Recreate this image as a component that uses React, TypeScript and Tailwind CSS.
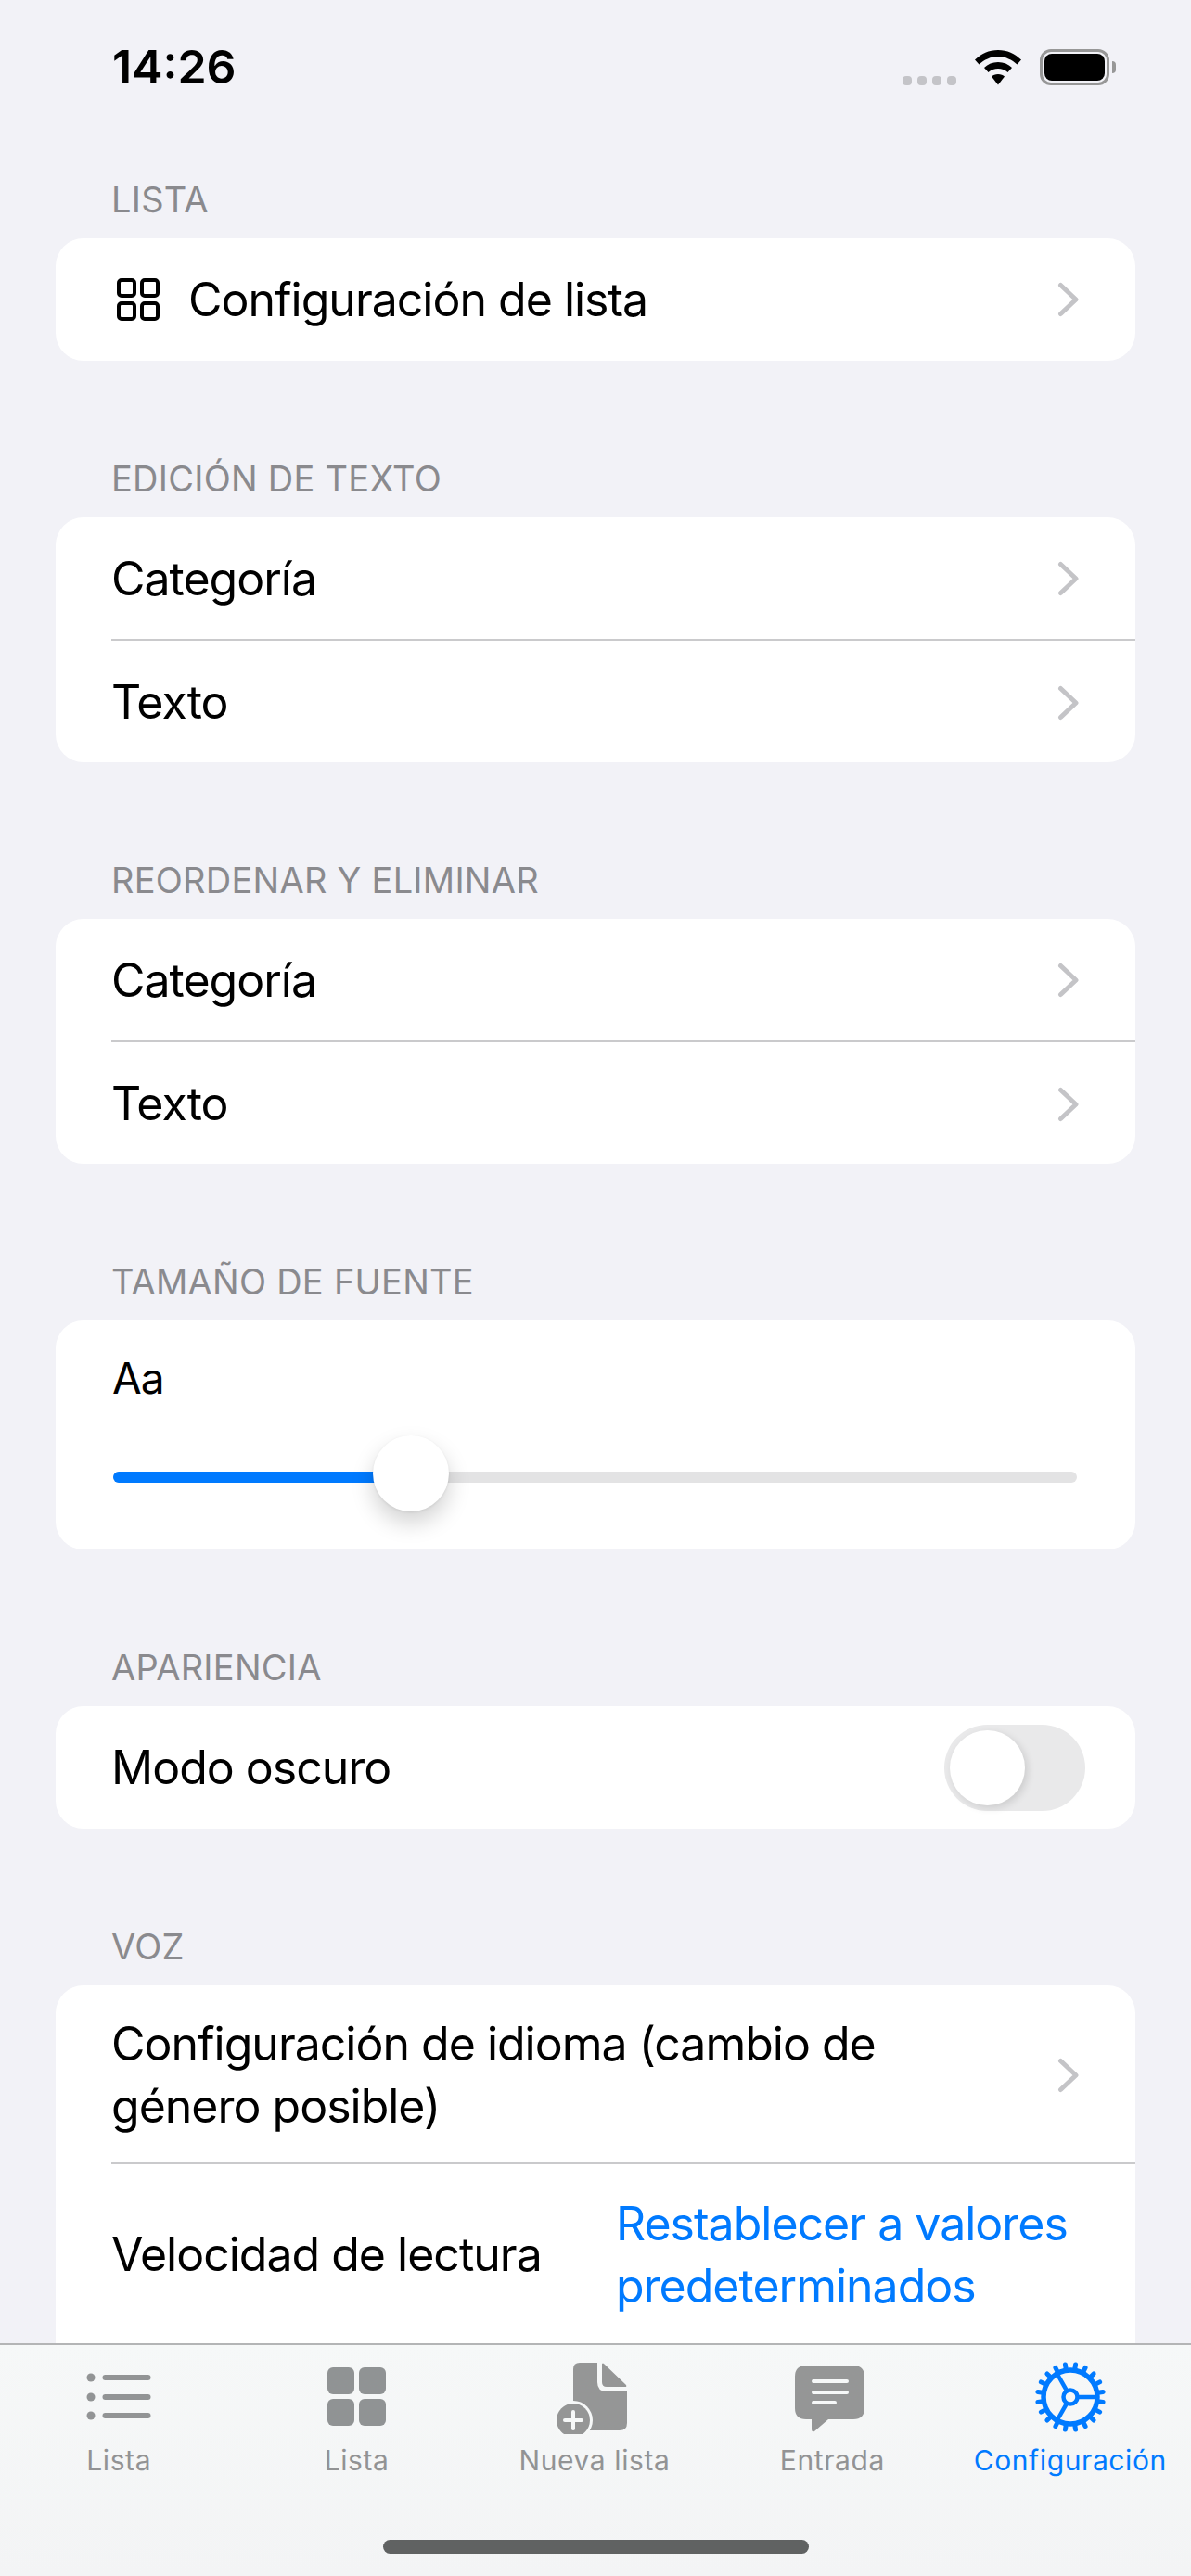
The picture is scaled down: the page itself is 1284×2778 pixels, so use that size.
const font = { fontFamily: '"Inter", "Noto Sans", sans-serif' }

const teeth = Array.from({ length: 20 }, (_, i) => i * 18 + 9)

const Chevron = () => (
    <svg width="24" height="38" viewBox="0 0 24 38" fill="none" className="shrink-0">
        <path d="M3.5 3.5 L20 19 L3.5 34.5" stroke="#c4c4c7" strokeWidth="5" strokeLinecap="round" strokeLinejoin="round" />
    </svg>
)

const GridOutline = () => (
    <svg width="46" height="46" viewBox="0 0 46 46" fill="none" stroke="#000" strokeWidth="4">
        <rect x="2" y="2" width="17" height="17" rx="3" />
        <rect x="27" y="2" width="17" height="17" rx="3" />
        <rect x="2" y="27" width="17" height="17" rx="3" />
        <rect x="27" y="27" width="17" height="17" rx="3" />
    </svg>
)

const ListIcon = () => (
    <svg width="90" height="80" viewBox="0 0 90 80" fill="#929495">
        <circle cx="15" cy="19" r="4.5" />
        <circle cx="15" cy="40" r="4.5" />
        <circle cx="15" cy="60" r="4.5" />
        <rect x="27.5" y="16" width="52" height="6" rx="3" />
        <rect x="27.5" y="37" width="52" height="6" rx="3" />
        <rect x="27.5" y="57" width="52" height="6" rx="3" />
    </svg>
)

const GridIcon = () => (
    <svg width="90" height="80" viewBox="0 0 90 80" fill="#909394">
        <rect x="13" y="8" width="29" height="29" rx="6" />
        <rect x="47" y="8" width="29" height="29" rx="6" />
        <rect x="13" y="42" width="29" height="29" rx="6" />
        <rect x="47" y="42" width="29" height="29" rx="6" />
    </svg>
)

const DocIcon = () => (
    <svg width="90" height="80" viewBox="0 0 90 80" fill="#959696">
        <path d="M29 3 H48 V24 Q48 34 58 34 H80 V68 Q80 76 72 76 H29 Q22 76 22 69 V10 Q22 3 29 3 Z" />
        <path d="M53 4 Q54 3 55 4 L79 27 Q80 29 78 29 H58 Q53 29 53 24 Z" />
        <circle cx="22" cy="65" r="21" fill="#f6f8f8" />
        <circle cx="22" cy="65" r="18" />
        <rect x="11" y="63" width="22" height="4" rx="2" fill="#f6f8f8" />
        <rect x="20" y="54" width="4" height="22" rx="2" fill="#f6f8f8" />
    </svg>
)

const EntryIcon = () => (
    <svg width="90" height="80" viewBox="0 0 90 80" fill="#959696">
        <path d="M17 6 H68 Q80 6 80 18 V52 Q80 64 68 64 H41 L26 77 Q23 78 23 75 V64 H17 Q5 64 5 52 V18 Q5 6 17 6 Z" />
        <rect x="23" y="21" width="40" height="4" rx="2" fill="#f6f8f8" />
        <rect x="23" y="33" width="40" height="4" rx="2" fill="#f6f8f8" />
        <rect x="23" y="44" width="27" height="4" rx="2" fill="#f6f8f8" />
    </svg>
)

const GearIcon = () => (
    <svg width="90" height="80" viewBox="0 0 90 80" fill="none" stroke="#007aff">
        <g transform="translate(45 40)">
            {teeth.map((deg) => (
                <line key={deg} x1="0" y1="-30" x2="0" y2="-35.5" strokeWidth="5" strokeLinecap="round" transform={`rotate(${deg})`} />
            ))}
            <circle r="29" strokeWidth="5.5" />
            <circle r="7.5" strokeWidth="4.5" />
            <line x1="9" y1="0" x2="28" y2="0" strokeWidth="4.5" />
            <line x1="-4.5" y1="-7.8" x2="-14" y2="-24.5" strokeWidth="4.5" />
            <line x1="-4.5" y1="7.8" x2="-14" y2="24.5" strokeWidth="4.5" />
        </g>
    </svg>
)

const Header = ({ label }: { label: string }) => (
    <h2 className="h-[46px] mb-[19px] pl-[120px] text-[38px] leading-[46px] tracking-[0.25px] font-normal text-[#8a8a8e]">{label}</h2>
)

const Row = ({ children, border }: { children: React.ReactNode; border?: boolean }) => (
    <div className="pl-[60px]">
        <div className={`box-border h-[132px] pr-[60px] flex items-center justify-between border-[#cacacc] ${border ? "border-t-2 mt-[-1px] pt-[3px]" : ""}`}>
            {children}
        </div>
    </div>
)

const tabs = [
    { label: "Lista", icon: <ListIcon /> },
    { label: "Lista", icon: <GridIcon /> },
    { label: "Nueva lista", icon: <DocIcon /> },
    { label: "Entrada", icon: <EntryIcon /> },
    { label: "Configuración", icon: <GearIcon />, active: true },
]

export default function App() {
    return (
        <div className="relative h-[2778px] overflow-hidden bg-[#f2f2f7] text-[50px] tracking-[-1px] text-black" style={font}>
            <div className="h-[192px] relative">
                <span className="absolute left-[121px] top-[42px] text-[50px] leading-[60px] font-semibold tracking-[0px]">14:26</span>
                <div className="absolute left-[973px] top-[53px] flex items-end gap-[20px] h-[39px]">
                    <div className="flex gap-[6px] h-[10px]">
                        <span className="w-[10px] h-[10px] rounded-[4px] bg-[#c4c4c8]" />
                        <span className="w-[10px] h-[10px] rounded-[4px] bg-[#c4c4c8]" />
                        <span className="w-[10px] h-[10px] rounded-[4px] bg-[#c4c4c8]" />
                        <span className="w-[10px] h-[10px] rounded-[4px] bg-[#c4c4c8]" />
                    </div>
                    <svg width="50" height="38" viewBox="0 0 50 38" fill="#000">
                        <path d="M25 0 C35 0 43 4 50 10.5 L45.5 15.5 C40 10.5 33 7 25 7 C17 7 10 10.5 4.5 15.5 L0 10.5 C7 4 15 0 25 0 Z" />
                        <path d="M25 13 C31 13 36 15 40 19 L35.5 24 C32.5 21.5 29 20 25 20 C21 20 17.5 21.5 14.5 24 L10 19 C14 15 19 13 25 13 Z" />
                        <path d="M25 26 C28 26 30.5 27 32 28.5 L25 37.5 L18 28.5 C19.5 27 22 26 25 26 Z" />
                    </svg>
                    <div className="flex items-center gap-[3px] h-[39px]">
                        <div className="box-border w-[75px] h-[39px] rounded-[12px] border-[3px] border-[#979797] p-[2px]">
                            <div className="w-full h-full rounded-[8px] bg-black" />
                        </div>
                        <div className="w-[4px] h-[13px] rounded-r-full bg-[#979797]" />
                    </div>
                </div>
            </div>

            <Header label="LISTA" />
            <section className="mx-[60px] rounded-[30px] bg-white">
                <div className="h-[132px] pl-[66px] pr-[60px] flex items-center justify-between">
                    <div className="flex items-center gap-[31px]">
                        <GridOutline />
                        <span>Configuración de lista</span>
                    </div>
                    <Chevron />
                </div>
            </section>

            <div className="mt-[104px]">
                <Header label="EDICIÓN DE TEXTO" />
                <section className="mx-[60px] h-[264px] rounded-[30px] bg-white">
                    <Row><span>Categoría</span><Chevron /></Row>
                    <Row border><span>Texto</span><Chevron /></Row>
                </section>
            </div>

            <div className="mt-[104px]">
                <Header label="REORDENAR Y ELIMINAR" />
                <section className="mx-[60px] h-[264px] rounded-[30px] bg-white">
                    <Row><span>Categoría</span><Chevron /></Row>
                    <Row border><span>Texto</span><Chevron /></Row>
                </section>
            </div>

            <div className="mt-[104px]">
                <Header label="TAMAÑO DE FUENTE" />
                <section className="mx-[60px] h-[247px] rounded-[30px] bg-white pl-[62px] pr-[63px] pt-[31px]">
                    <div className="ml-[-1px] text-[46px] leading-[62px]">Aa</div>
                    <div className="relative mt-[70px] h-[12px] rounded-full bg-[#e3e3e4]">
                        <div className="h-full w-[300px] rounded-l-full bg-[#007aff]" />
                        <div className="absolute left-[280px] top-[-39px] w-[82px] h-[82px] rounded-full bg-white shadow-[0_12px_24px_rgba(0,0,0,0.18),0_1px_3px_rgba(0,0,0,0.08)]" />
                    </div>
                </section>
            </div>

            <div className="mt-[104px]">
                <Header label="APARIENCIA" />
                <section className="mx-[60px] rounded-[30px] bg-white">
                    <div className="h-[132px] pl-[60px] pr-[54px] flex items-center justify-between">
                        <span>Modo oscuro</span>
                        <div className="box-border w-[152px] h-[93px] rounded-full bg-[#e9e9ea] p-[6px]">
                            <div className="w-[81px] h-[81px] rounded-full bg-white shadow-[3px_3px_8px_rgba(0,0,0,0.12)]" />
                        </div>
                    </div>
                </section>
            </div>

            <div className="mt-[104px]">
                <Header label="VOZ" />
                <section className="mx-[60px] rounded-t-[30px] bg-white">
                    <div className="pl-[60px] pr-[60px] pt-[2px] h-[191px] flex items-center justify-between">
                        <span className="w-[900px] leading-[67px]">Configuración de idioma (cambio de género posible)</span>
                        <Chevron />
                    </div>
                    <div className="pl-[60px]">
                        <div className="box-border h-[197px] border-t-2 border-[#cacacc] flex items-center pr-[61px]">
                            <span className="w-[544px] shrink-0">Velocidad de lectura</span>
                            <span className="leading-[67px] text-[#007aff]">Restablecer a valores predeterminados</span>
                        </div>
                    </div>
                </section>
            </div>

            <nav className="absolute left-0 right-0 top-[2527px] h-[251px] border-t-2 border-[#b4b5b6] bg-gradient-to-b from-[#f6f8f8] to-[#f3f4f5] tracking-normal">
                <div className="grid grid-cols-5 pt-[16px] pr-[2px]">
                    {tabs.map((tab, i) => (
                        <div key={i} className="flex flex-col items-center">
                            {tab.icon}
                            <span className={`mt-[8px] text-[30px] leading-[40px] tracking-[0.6px] whitespace-nowrap ${tab.active ? "text-[#007aff]" : "text-[#929394]"}`}>
                                {tab.label}
                            </span>
                        </div>
                    ))}
                </div>
                <div className="absolute left-[413px] top-[210px] w-[459px] h-[15px] rounded-full bg-[#606262]" />
            </nav>
        </div>
    )
}
